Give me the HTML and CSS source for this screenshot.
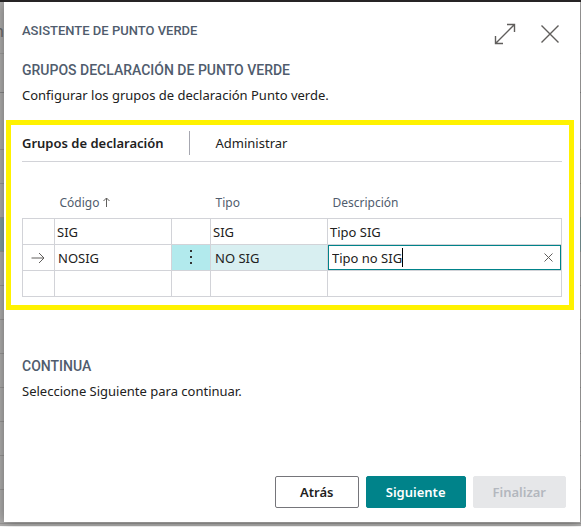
FILE: index.html
```html
<!DOCTYPE html>
<html lang="es">

<head>
  <meta charset="UTF-8">
  <meta name="viewport" content="width=device-width, initial-scale=1">
  <title>Asistente de Punto verde</title>
  <link rel="stylesheet" href="styles.css">
</head>

<body>
  <!-- Dimmed list page behind the dialog -->
  <div class="backdrop" aria-hidden="true">
    <div class="backdrop-title">m</div>
    <div class="backdrop-bar"></div>
    <div class="backdrop-head"></div>
    <div class="backdrop-row"></div>
    <div class="backdrop-row"></div>
    <div class="backdrop-row selected"></div>
    <div class="backdrop-row"></div>
    <div class="backdrop-row"></div>
    <div class="backdrop-row"></div>
    <div class="backdrop-row"></div>
    <div class="backdrop-row"></div>
    <div class="backdrop-row"></div>
    <div class="backdrop-row"></div>
    <div class="backdrop-row"></div>
  </div>

  <div class="dialog" role="dialog" aria-labelledby="dialog-title">
    <header class="dialog-header">
      <h1 id="dialog-title">ASISTENTE DE PUNTO VERDE</h1>
      <div class="dialog-tools">
        <button type="button" class="icon-button" aria-label="Expandir">
          <svg width="22" height="22" viewBox="0 0 22 22">
            <path d="M1.5 20.5 L20.5 1.5 M13 1.5 H20.5 V9 M1.5 13 V20.5 H9" />
          </svg>
        </button>
        <button type="button" class="icon-button" aria-label="Cerrar">
          <svg width="20" height="20" viewBox="0 0 20 20">
            <path d="M1.5 1.5 L18.5 18.5 M18.5 1.5 L1.5 18.5" />
          </svg>
        </button>
      </div>
    </header>

    <section>
      <h2>GRUPOS DECLARACIÓN DE PUNTO VERDE</h2>
      <p>Configurar los grupos de declaración Punto verde.</p>
    </section>

    <section class="groups">
      <div class="groups-bar">
        <button type="button" class="tab active">Grupos de declaración</button>
        <button type="button" class="tab">Administrar</button>
      </div>

      <table>
        <colgroup>
          <col class="col-marker">
          <col class="col-code">
          <col class="col-menu">
          <col class="col-type">
          <col>
        </colgroup>
        <thead>
          <tr>
            <th></th>
            <th scope="col">Código
              <svg class="sort" width="7" height="10" viewBox="0 0 7 10">
                <path d="M3.5 10 V1 M0.5 4 L3.5 1 L6.5 4" />
              </svg>
            </th>
            <th></th>
            <th scope="col">Tipo</th>
            <th scope="col" id="col-desc">Descripción</th>
          </tr>
        </thead>
        <tbody>
          <tr>
            <td></td>
            <td>SIG</td>
            <td></td>
            <td>SIG</td>
            <td>Tipo SIG</td>
          </tr>
          <tr class="current">
            <td class="marker">
              <svg width="14" height="12" viewBox="0 0 14 12">
                <path d="M0.5 6 H13 M8 1 L13 6 L8 11" />
              </svg>
            </td>
            <td>NOSIG</td>
            <td class="menu">
              <button type="button" class="row-menu" aria-label="Mostrar más opciones">
                <svg width="4" height="14" viewBox="0 0 4 14">
                  <path d="M1 0h2v2h-2z M1 6h2v2h-2z M1 12h2v2h-2z" />
                </svg>
              </button>
            </td>
            <td class="type">NO SIG</td>
            <td class="editing">
              <div class="field">
                <input type="text" value="Tipo no SIG" size="9" aria-labelledby="col-desc">
                <span class="caret"></span>
                <button type="button" class="clear" aria-label="Borrar">
                  <svg width="9" height="9" viewBox="0 0 9 9">
                    <path d="M0.5 0.5 L8.5 8.5 M8.5 0.5 L0.5 8.5" />
                  </svg>
                </button>
              </div>
            </td>
          </tr>
          <tr>
            <td></td>
            <td></td>
            <td></td>
            <td></td>
            <td></td>
          </tr>
        </tbody>
      </table>
    </section>

    <section class="next-step">
      <h2>CONTINUA</h2>
      <p>Seleccione Siguiente para continuar.</p>
    </section>

    <footer class="actions">
      <button type="button" class="btn">Atrás</button>
      <button type="button" class="btn btn-primary">Siguiente</button>
      <button type="button" class="btn" disabled>Finalizar</button>
    </footer>
  </div>
</body>

</html>
```

FILE: styles.css
```css
* {
  box-sizing: border-box;
}

body {
  display: flex;
  position: relative;
  min-height: 100vh;
  margin: 0;
  padding: 0 1px 5px 4px;
  border-top: 2px solid #262425;
  background-color: #ffffff;
  color: #212121;
  font-family: "Noto Sans", "Open Sans", sans-serif;
  font-size: 13px;
  line-height: 20px;
}

button,
input {
  font: inherit;
  color: inherit;
}

button {
  padding: 0;
  border: none;
  background: none;
  cursor: pointer;
}

svg {
  display: block;
  fill: none;
  stroke: #605e5c;
}

/* Page behind the dialog */
.backdrop {
  position: absolute;
  inset: 0 0 1px 0;
  overflow: hidden;
  background-color: #b0afae;
}

.backdrop-title {
  display: flex;
  justify-content: flex-end;
  width: 4px;
  height: 51px;
  padding-top: 19px;
  color: #6b6b6b;
  font-size: 16px;
}

.backdrop-bar {
  height: 40px;
  border-top: 1px solid #a09f9e;
  border-bottom: 1px solid #8a8a8a;
}

.backdrop-head {
  height: 57px;
  border-bottom: 1px solid #999897;
}

.backdrop-row {
  height: 34px;
  border-bottom: 1px solid #999897;
}

.backdrop-row.selected {
  background-color: #83a1a3;
}

/* Dialog */
.dialog {
  position: relative;
  flex: 1;
  display: flex;
  flex-direction: column;
  min-width: 0;
  padding: 0 18px 14px;
  background-color: #ffffff;
  box-shadow: 0 0 12px rgba(0, 0, 0, 0.4);
}

.dialog-header {
  display: flex;
  justify-content: space-between;
  align-items: center;
  height: 58px;
}

.dialog-tools {
  display: flex;
  align-items: center;
  gap: 24px;
  padding: 6px 2px 0 0;
}

.dialog-tools svg {
  stroke-width: 1.4;
}

h1,
h2 {
  margin: 0;
  color: #505c6d;
  font-family: Roboto, "Liberation Sans", sans-serif;
  font-size: 14px;
  font-weight: 500;
  line-height: 20px;
}

h1 {
  font-size: 13px;
}

p {
  margin: 5px 0 0;
}

/* Highlighted groups area */
.groups {
  margin: 15px -12px 0 -16px;
  padding: 0 7px 8px 11px;
  border: 5px solid #fff200;
}

.groups-bar {
  display: flex;
  align-items: center;
  height: 37px;
  border-bottom: 1px solid #d2d3d8;
}

.tab {
  height: 24px;
}

.tab.active {
  margin-right: 26px;
  padding-right: 25px;
  border-right: 1px solid #a6a7b0;
  font-weight: 600;
}

table {
  width: 100%;
  border-collapse: collapse;
  table-layout: fixed;
}

.col-marker {
  width: 32px;
}

.col-code,
.col-type {
  width: 117px;
}

.col-menu {
  width: 39px;
}

th {
  height: 56px;
  padding: 27px 5px 0;
  color: #505c6d;
  font-size: 12px;
  font-weight: 400;
  text-align: left;
}

.sort {
  display: inline-block;
}

td {
  height: 26px;
  padding: 1px 2px 0;
  border: 1px solid #d2d3d8;
}

.current td {
  padding-left: 3px;
}

.current .marker {
  padding-left: 8px;
}

.current .menu {
  padding: 0;
  background-color: #b2eaed;
}

.current .type {
  padding-left: 4px;
  background-color: #d8eff1;
}

.current .editing {
  padding: 0;
}

.row-menu {
  display: flex;
  justify-content: center;
  align-items: center;
  width: 100%;
  height: 25px;
}

.row-menu svg {
  fill: #333333;
  stroke: none;
}

.field {
  display: flex;
  align-items: center;
  height: 25px;
  padding: 0 7px 0 3px;
  border: 1px solid #00838a;
}

.field input {
  field-sizing: content;
  padding: 1px 0 0;
  border: none;
  outline: none;
  background: none;
}

.caret {
  width: 1px;
  height: 19px;
  background-color: #000000;
}

.clear {
  margin-left: auto;
}

.next-step {
  margin-top: 46px;
}

/* Footer buttons */
.actions {
  display: flex;
  justify-content: flex-end;
  gap: 7px;
  margin: auto -4px 0 0;
}

.btn {
  min-width: 84px;
  height: 32px;
  padding: 0 19px;
  border: 1px solid #75757a;
  border-radius: 2px;
  background-color: #ffffff;
  font-weight: 600;
}

.btn-primary {
  border-color: #00838a;
  background-color: #00838a;
  color: #ffffff;
}

.btn:disabled {
  border-color: #e6e7e9;
  background-color: #e6e7e9;
  color: #b3b7be;
  cursor: default;
}
```
